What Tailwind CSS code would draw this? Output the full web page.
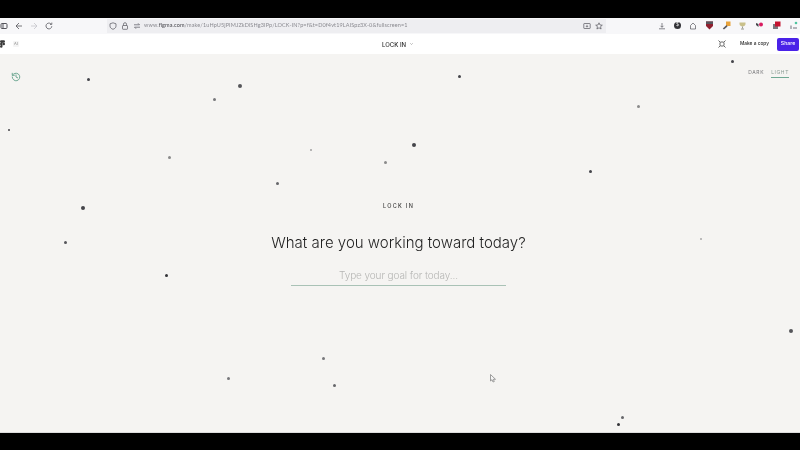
<!DOCTYPE html>
<html lang="en">
<head>
  <meta charset="UTF-8">
  <title>LOCK IN</title>
  <script src="https://cdn.jsdelivr.net/npm/@tailwindcss/browser@4"></script>
</head>
<body class="bg-black w-[800px] h-[450px] overflow-hidden font-['Inter',sans-serif]">
  <div class="flex flex-col h-full pt-[18px] pb-[17px] blur-[0.35px]">

    <!-- Browser bar -->
    <div class="h-[16px] bg-[#f7f7f9] flex items-center text-[#55555c] shrink-0 pb-[1px]">
      <svg class="w-[8px] h-[8px]" viewBox="0 0 8 8" fill="none" stroke="currentColor"><rect x="1" y="1.500" width="6" height="5" rx="1"/><path d="M3 1.500v5"/></svg>
      <svg class="w-[8px] h-[8px] ml-[7px]" viewBox="0 0 8 8" fill="none" stroke="currentColor" stroke-width="0.8"><path d="M7 4H1M4 1L1 4l3 3"/></svg>
      <svg class="w-[8px] h-[8px] ml-[7px] text-[#c4c4ca]" viewBox="0 0 8 8" fill="none" stroke="currentColor" stroke-width="0.8"><path d="M1 4h6M4 1l3 3-3 3"/></svg>
      <svg class="w-[8px] h-[8px] ml-[7px]" viewBox="0 0 8 8" fill="none" stroke="currentColor" stroke-width="0.8"><path d="M6.800 4.200A2.900 2.900 0 1 1 5.800 1.800M6.800 .6v1.800H5"/></svg>
      <div class="ml-[54px] w-[499px] h-[14px] bg-[#eeeef1] flex items-center pl-[2px] shrink-0">
        <svg class="w-[8px] h-[8px]" viewBox="0 0 8 8" fill="none" stroke="currentColor" stroke-width="0.7"><path d="M4 .8l3 1v2.300c0 1.600-1.300 2.600-3 3.200-1.700-.6-3-1.600-3-3.200V1.800z"/></svg>
        <svg class="w-[8px] h-[8px] ml-[4px]" viewBox="0 0 8 8" fill="none" stroke="currentColor" stroke-width="0.7"><rect x="1.500" y="3.500" width="5" height="3.800" rx=".6"/><path d="M2.500 3.500V2.200a1.500 1.500 0 0 1 3 0v1.300"/></svg>
        <svg class="w-[8px] h-[8px] ml-[4px]" viewBox="0 0 8 8" fill="none" stroke="currentColor" stroke-width="0.7"><path d="M1 2.800h5.500M5 1.300l1.500 1.500M7 5.200H1.500M3 6.700L1.500 5.200"/></svg>
        <span class="ml-[3px] text-[5.500px] text-[#8a8a90] whitespace-nowrap font-['Lato',sans-serif] tracking-[0.12px]">www.<span class="text-[#44444a]">figma.com</span>/make/1uHpU5jPIMJZkDlSHg3IPp/LOCK-IN?p=f&amp;t=D0f4vt19LAISpz3X-0&amp;fullscreen=1</span>
        <svg class="w-[8px] h-[8px] ml-auto" viewBox="0 0 8 8" fill="none" stroke="currentColor" stroke-width="0.7"><rect x=".8" y="1.500" width="6.400" height="5" rx=".5"/><path d="M4 2.800v2.200M3 4.200l1 1 1-1"/></svg>
        <svg class="w-[8px] h-[8px] ml-[4px] mr-[3px]" viewBox="0 0 8 8" fill="none" stroke="currentColor" stroke-width="0.7"><path d="M4 .8l1 2.200 2.300.2-1.800 1.500.6 2.300L4 5.800 1.900 7l.6-2.300L.7 3.200 3 3z"/></svg>
      </div>
      <div class="flex-1 flex items-center justify-between pl-[52px] pr-[2px]">
        <svg class="w-[8px] h-[8px]" viewBox="0 0 8 8" fill="none" stroke="currentColor" stroke-width="0.7"><path d="M4 1v4.200M2.500 3.800L4 5.300l1.500-1.500M1 6.800h6"/></svg>
        <span class="w-[7px] h-[7px] rounded-full bg-[#333338] flex items-center justify-center text-[4.500px] text-white">$</span>
        <svg class="w-[8px] h-[8px]" viewBox="0 0 8 8" fill="none" stroke="currentColor" stroke-width="0.7"><path d="M1.500 7V3.500L4 1l2.500 2.500V7z"/></svg>
        <svg class="w-[9px] h-[9px]" viewBox="0 0 9 9"><path d="M1 .5h7V5L4.500 8.500 1 5z" fill="#8f1f2f"/><path d="M1 .5h7v2.500H1z" fill="#55555c"/></svg>
        <svg class="w-[9px] h-[9px]" viewBox="0 0 9 9"><rect x="4" y=".5" width="4.500" height="4.500" fill="#e8a33c"/><path d="M.8 7.500L4.500 4l1 1.500L2 8.500z" fill="#5a5a60"/></svg>
        <svg class="w-[9px] h-[9px]" viewBox="0 0 9 9"><path d="M1.500 1.500h6V3c0 1.500-1.500 2.500-3 2.500S1.500 4.500 1.500 3z" fill="#c9c08a"/><path d="M4.500 5.500V7.500M3 8h3" stroke="#9a9a90"/></svg>
        <svg class="w-[9px] h-[9px]" viewBox="0 0 9 9"><circle cx="6" cy="3.500" r="2" fill="#d81b60"/><path d="M1 2l2.500 1v3L1 4z" fill="#44444a"/></svg>
        <svg class="w-[9px] h-[9px]" viewBox="0 0 9 9"><rect x="1" y="3" width="5" height="5" fill="#77777d"/><rect x="3" y=".5" width="5.500" height="5" fill="#c4122f"/></svg>
        <svg class="w-[9px] h-[9px]" viewBox="0 0 9 9"><path d="M1 8V4.500h2V8zM4 8V6h4v2z" fill="#b4b4ba"/><circle cx="7" cy="2" r="1.300" fill="#4fc4a0"/></svg>
      </div>
    </div>

    <!-- Figma bar -->
    <div class="h-[20px] bg-white flex items-center relative shrink-0">
      <svg class="w-[5px] h-[8px]" viewBox="0 0 6 9" fill="#3a3a3a"><circle cx="4.500" cy="4.500" r="1.500"/><path d="M1.500 0H3v3H1.500a1.500 1.500 0 0 1 0-3zM3 0h1.500a1.500 1.500 0 0 1 0 3H3zM1.500 3H3v3H1.500a1.500 1.500 0 0 1 0-3zM1.500 6H3v1.500A1.500 1.500 0 1 1 1.500 6z"/></svg>
      <span class="ml-[8px] px-[1px] text-[4px] text-[#8d8d8d] bg-[#f4f4f4] rounded-[1px]">AI</span>
      <div class="absolute left-[382px] top-0 h-full flex items-center gap-[4px] text-[6px] text-[#2c2c2c] font-medium">
        <span>LOCK IN</span>
        <svg class="w-[3px] h-[2px]" viewBox="0 0 6 4" fill="none" stroke="#777" stroke-width="1"><path d="M.5 .5L3 3l2.500-2.500"/></svg>
      </div>
      <div class="ml-auto flex items-center pr-[1px]">
        <svg class="w-[8px] h-[8px] mr-[10px]" viewBox="0 0 8 8" fill="none" stroke="#444" stroke-width="0.8"><rect x="2" y="2" width="4" height="4" rx="1"/><path d="M.5 .5l1.500 1.500M7.500 .5L6 2M.5 7.500L2 6M7.500 7.500L6 6"/></svg>
        <span class="h-[14px] px-[4px] mr-[4px] flex items-center text-[4.800px] text-[#2c2c2c] font-medium bg-white">Make a copy</span>
        <span class="w-[22px] h-[13px] rounded-[2px] bg-[#4a22e8] flex items-center justify-center text-[5.200px] text-white font-medium">Share</span>
      </div>
    </div>

    <!-- Canvas -->
    <div class="flex-1 bg-[#f5f4f2] relative overflow-hidden flex flex-col items-center border-b border-[#dcdcdc] pr-[3px]">
      <svg class="absolute left-[11px] top-[18px] w-[10px] h-[10px]" viewBox="0 0 24 24" fill="none" stroke="#6fa893" stroke-width="2.400" stroke-linecap="round" stroke-linejoin="round"><path d="M3 12a9 9 0 1 0 3-6.700L3 8"/><path d="M3 3v5h5"/><path d="M12 7v5l4 2"/></svg>

      <div class="absolute right-[11px] top-[15px] flex gap-[7px] text-[5px] tracking-[0.6px] leading-[7px]">
        <span class="text-[#77777a] pb-[1px]">DARK</span>
        <span class="text-[#8a9c94] pb-[1px] border-b border-[#6fa893]">LIGHT</span>
      </div>

      <!-- Dots -->
      <span class="absolute left-[87px] top-[24px] w-[3px] h-[3px] rounded-full bg-[#44444a]"></span>
      <span class="absolute left-[213px] top-[44px] w-[3px] h-[3px] rounded-full bg-[#77777a]"></span>
      <span class="absolute left-[238px] top-[30px] w-[4px] h-[4px] rounded-full bg-[#55555a]"></span>
      <span class="absolute left-[458px] top-[21px] w-[3px] h-[3px] rounded-full bg-[#44444a]"></span>
      <span class="absolute left-[731px] top-[6px] w-[3px] h-[3px] rounded-full bg-[#44444a]"></span>
      <span class="absolute left-[637px] top-[51px] w-[3px] h-[3px] rounded-full bg-[#8a8a8a]"></span>
      <span class="absolute left-[8px] top-[75px] w-[2px] h-[2px] rounded-full bg-[#44444a]"></span>
      <span class="absolute left-[168px] top-[102px] w-[3px] h-[3px] rounded-full bg-[#8a8a8a]"></span>
      <span class="absolute left-[310px] top-[95px] w-[2px] h-[2px] rounded-full bg-[#a0a0a0]"></span>
      <span class="absolute left-[384px] top-[107px] w-[3px] h-[3px] rounded-full bg-[#8a8a8a]"></span>
      <span class="absolute left-[412px] top-[89px] w-[4px] h-[4px] rounded-full bg-[#44444a]"></span>
      <span class="absolute left-[276px] top-[128px] w-[3px] h-[3px] rounded-full bg-[#66666a]"></span>
      <span class="absolute left-[589px] top-[116px] w-[3px] h-[3px] rounded-full bg-[#44444a]"></span>
      <span class="absolute left-[81px] top-[152px] w-[4px] h-[4px] rounded-full bg-[#44444a]"></span>
      <span class="absolute left-[64px] top-[187px] w-[3px] h-[3px] rounded-full bg-[#55555a]"></span>
      <span class="absolute left-[165px] top-[220px] w-[3px] h-[3px] rounded-full bg-[#333338]"></span>
      <span class="absolute left-[700px] top-[184px] w-[2px] h-[2px] rounded-full bg-[#a8a8a8]"></span>
      <span class="absolute left-[789px] top-[275px] w-[4px] h-[4px] rounded-full bg-[#55555a]"></span>
      <span class="absolute left-[322px] top-[303px] w-[3px] h-[3px] rounded-full bg-[#77777a]"></span>
      <span class="absolute left-[227px] top-[323px] w-[3px] h-[3px] rounded-full bg-[#77777a]"></span>
      <span class="absolute left-[333px] top-[330px] w-[3px] h-[3px] rounded-full bg-[#66666a]"></span>
      <span class="absolute left-[621px] top-[362px] w-[3px] h-[3px] rounded-full bg-[#66666a]"></span>
      <span class="absolute left-[617px] top-[369px] w-[3px] h-[3px] rounded-full bg-[#333338]"></span>

      <!-- Cursor -->
      <svg class="absolute left-[490px] top-[320px] w-[6px] h-[9px]" viewBox="0 0 6 9" fill="#f5f5f5" stroke="#888" stroke-width="0.8"><path d="M.5 .5v6.500l1.500-1.300 1 2.300 1.300-.5-1-2.200H5.500z"/></svg>

      <!-- Goal prompt -->
      <p class="mt-[148px] text-[5.500px] font-medium tracking-[1.300px] text-[#3a3a3a] leading-[8px]">LOCK IN</p>
      <h1 class="mt-[23px] text-[15px] font-light leading-[20px] text-[#1f1f1f]">What are you working toward today?</h1>
      <div class="mt-[10px] w-[215px] h-[23px] border-b border-[#a9c2b6] flex items-center justify-center text-[10px] tracking-[-0.1px] font-light text-[#b5b5b3] pt-[3px]">Type your goal for today...</div>
    </div>
  </div>
</body>
</html>
